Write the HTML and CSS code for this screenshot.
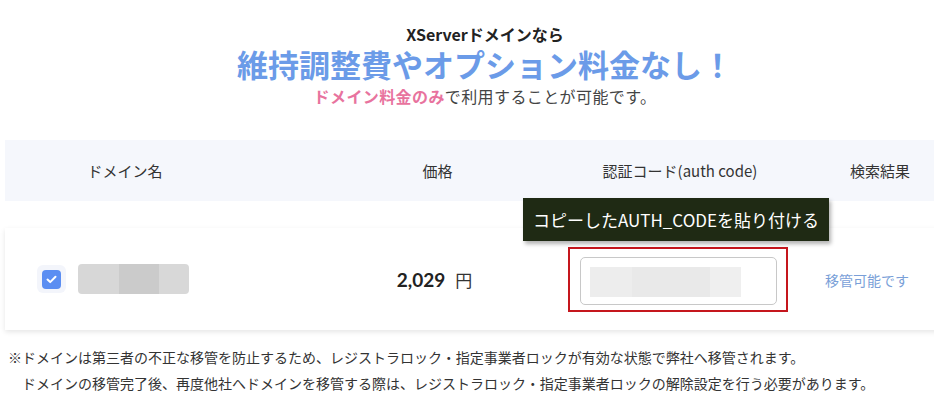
FILE: index.html
```html
<!DOCTYPE html>
<html lang="ja">
<head>
  <meta charset="UTF-8">
  <meta name="viewport" content="width=device-width, initial-scale=1.0">
  <title>XServerドメイン 移管</title>
  <link rel="stylesheet" href="styles.css">
</head>
<body>
  <div class="page">

    <!-- Lead -->
    <section class="lead">
      <p class="lead-small">XServerドメインなら</p>
      <h1 class="lead-title">維持調整費やオプション料金なし！</h1>
      <p class="lead-sub"><strong>ドメイン料金のみ</strong>で利用することが可能です。</p>
    </section>

    <!-- Transfer table -->
    <section class="transfer">
      <div class="transfer-head">
        <div class="cell col-domain">ドメイン名</div>
        <div class="cell col-price">価格</div>
        <div class="cell col-code">認証コード(auth code)</div>
        <div class="cell col-result">検索結果</div>
      </div>

      <div class="transfer-row">
        <div class="cell col-domain">
          <span class="check-wrap">
            <span class="check">
              <svg width="11" height="9" viewBox="0 0 11 9"><path d="M1.5 4.6 L4.2 7.1 L9.5 1.8" fill="none" stroke="#fff" stroke-width="2" stroke-linecap="round" stroke-linejoin="round"/></svg>
            </span>
          </span>
          <span class="blur-domain"></span>
        </div>
        <div class="cell col-price">
          <span class="price">2,029</span><span class="yen">円</span>
        </div>
        <div class="cell col-code">
          <div class="highlight">
            <div class="tooltip">コピーしたAUTH_CODEを貼り付ける</div>
            <div class="code-input"><span class="blur-code"></span></div>
          </div>
        </div>
        <div class="cell col-result">
          <span class="status">移管可能です</span>
        </div>
      </div>
    </section>

    <!-- Notes -->
    <section class="notes">
      <p>※ドメインは第三者の不正な移管を防止するため、レジストラロック・指定事業者ロックが有効な状態で弊社へ移管されます。</p>
      <p class="indent">ドメインの移管完了後、再度他社へドメインを移管する際は、レジストラロック・指定事業者ロックの解除設定を行う必要があります。</p>
    </section>

  </div>
</body>
</html>
```

FILE: styles.css
```css
html, body {
  margin: 0;
  padding: 0;
  background-color: #fff;
  overflow: hidden;
}

body {
  font-family: "Noto Sans CJK JP", "Noto Sans", sans-serif;
  color: #333;
}

.page {
  width: 970px;
}

p, h1 {
  margin: 0;
}

/* Lead */
.lead {
  text-align: center;
  padding-top: 24px;
}

.lead-small {
  font-size: 16px;
  font-weight: bold;
  line-height: 21px;
  color: #222;
}

.lead-title {
  margin-top: 1px;
  font-size: 31px;
  font-weight: bold;
  line-height: 36px;
  color: #6b9be8;
}

.lead-sub {
  font-size: 16px;
  line-height: 28px;
  color: #444;
  letter-spacing: 0.4px;
}

.lead-sub strong {
  color: #e8739e;
}

/* Table */
.transfer {
  margin: 30px 0 0 5px;
  width: 960px;
}

.transfer-head,
.transfer-row {
  display: grid;
  grid-template-columns: 240px 295px 280px 1fr;
  align-items: center;
}

.transfer-head {
  height: 61px;
  background-color: #f5f7fc;
  font-size: 15px;
  color: #333;
}

.transfer-head .col-domain {
  text-align: center;
}

.transfer-head .col-price {
  padding-left: 90px;
  text-align: center;
}

.transfer-head .col-code {
  text-align: center;
}

.transfer-head .col-result {
  padding-left: 30px;
}

.transfer-row {
  margin-top: 27px;
  height: 102px;
  background-color: #fff;
  box-shadow: 0 2px 5px rgba(0, 0, 0, 0.1);
}

.transfer-row .col-domain {
  display: flex;
  align-items: center;
  gap: 12px;
  padding-left: 32px;
}

.check-wrap {
  display: flex;
  align-items: center;
  justify-content: center;
  width: 29px;
  height: 28px;
  border-radius: 6px;
  background-color: #f3f5fb;
}

.check {
  display: flex;
  align-items: center;
  justify-content: center;
  width: 19px;
  height: 19px;
  border-radius: 4px;
  background-color: #5b8ef2;
}

.blur-domain {
  display: block;
  width: 111px;
  height: 30px;
  border-radius: 4px;
  background: linear-gradient(to right, #d7d7d7 0 41px, #cbcbcb 41px 81px, #d8d8d8 81px);
}

.transfer-row .col-price {
  padding-left: 84px;
  text-align: center;
  white-space: nowrap;
}

.price {
  font-family: Lato, "Noto Sans", sans-serif;
  font-size: 19px;
  font-weight: bold;
  color: #222;
}

.yen {
  margin-left: 10px;
  font-size: 17px;
  color: #333;
}

.transfer-row .col-code {
  padding-left: 28px;
}

.highlight {
  position: relative;
  width: 197px;
  padding: 8px 9px 5px 10px;
  border: 2px solid #c5161d;
}

.tooltip {
  position: absolute;
  left: -47px;
  top: -51px;
  height: 43px;
  padding: 0 10px;
  line-height: 43px;
  font-size: 17px;
  color: #fff;
  white-space: nowrap;
  background-color: #1f2a14;
  box-shadow: 2px 3px 4px rgba(0, 0, 0, 0.3);
}

.code-input {
  height: 48px;
  padding: 9px;
  border: 1px solid #c8c8c8;
  border-radius: 5px;
  box-sizing: border-box;
}

.blur-code {
  display: block;
  width: 151px;
  height: 30px;
  background: linear-gradient(to right, #ededed 0 42px, #e9e9e9 42px 120px, #efefef 120px);
}

.transfer-row .col-result {
  padding-left: 5px;
}

.status {
  font-size: 14px;
  color: #7a9fd8;
}

/* Notes */
.notes {
  margin-top: 14px;
  padding-left: 8px;
  font-size: 14px;
  line-height: 26px;
  color: #333;
}

.notes .indent {
  padding-left: 14px;
}
```
